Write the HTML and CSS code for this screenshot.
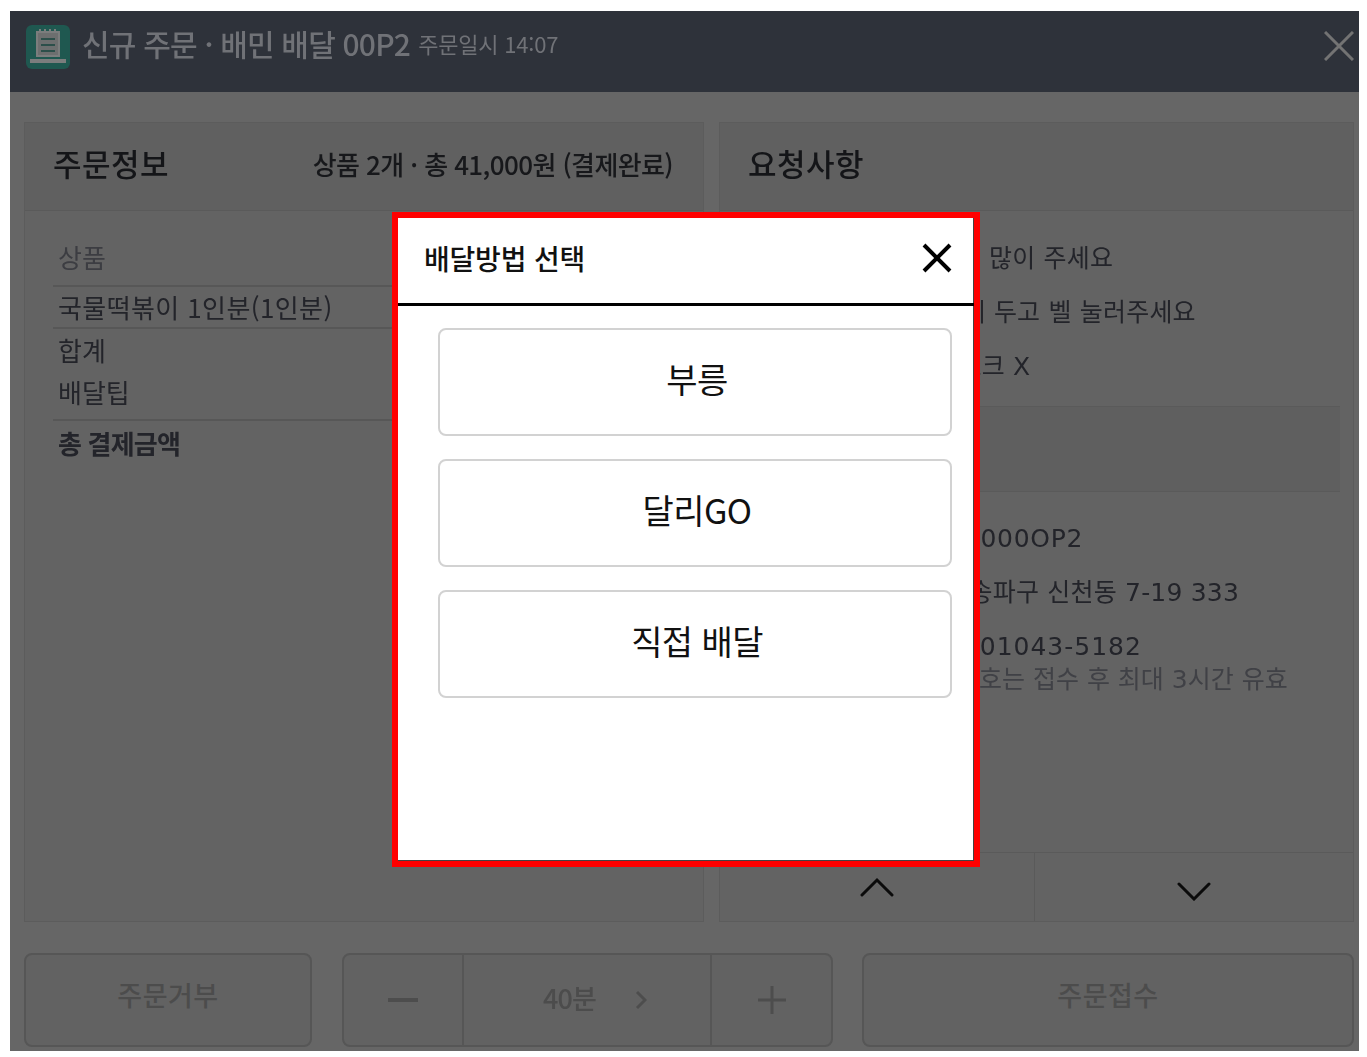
FILE: index.html
```html
<!DOCTYPE html>
<html lang="ko">
<head>
<meta charset="utf-8">
<title>신규 주문</title>
<link rel="stylesheet" href="styles.css">
</head>
<body>
<div class="window">
  <header class="topbar">
    <span class="app-icon">
      <svg width="44" height="44" viewBox="0 0 44 44"><rect width="44" height="44" rx="6" fill="#1f5850"/><path d="M11 7h22v24H11z" fill="#6d6f6f" stroke="#7b7d7d" stroke-width="2"/><path d="M15 14h14M15 20h14M15 26h14" stroke="#2c4f4a" stroke-width="2"/><path d="M4 36h36" stroke="#7b7d7d" stroke-width="4"/><path d="M14 4v4M19 4v4M24 4v4M29 4v4" stroke="#7b7d7d" stroke-width="2"/></svg>
    </span>
    <h1 class="topbar-title">신규 주문 · 배민 배달 00P2</h1>
    <span class="topbar-time">주문일시 14:07</span>
    <svg class="topbar-close" width="30" height="30" viewBox="0 0 30 30"><path d="M1 1l28 28M29 1L1 29" stroke="#737373" stroke-width="3" fill="none"/></svg>
  </header>

  <main class="panels">
    <section class="panel">
      <div class="panel-head">
        <h2 class="panel-title">주문정보</h2>
        <span class="panel-summary">상품 2개 · 총 41,000원 (결제완료)</span>
      </div>
      <div class="order-list">
        <div class="order-row order-label">상품</div>
        <div class="order-row order-item">국물떡볶이 1인분(1인분)</div>
        <div class="order-row">합계</div>
        <div class="order-row order-last">배달팁</div>
        <div class="order-row order-total">총 결제금액</div>
      </div>
    </section>

    <section class="panel">
      <div class="panel-head">
        <h2 class="panel-title">요청사항</h2>
      </div>
      <div class="request-list">
        <div class="line line-a">단무지는 많이 주세요</div>
        <div class="line line-b">문 앞에 두고 벨 눌러주세요</div>
        <div class="line line-c">수저 포크 X</div>
      </div>
      <div class="band"></div>
      <div class="info-list">
        <div class="line line-d">B2000OP2</div>
        <div class="line line-e">서울 송파구 신천동 7-19 333</div>
        <div class="line line-f">050-01043-5182</div>
        <div class="note">안심번호는 접수 후 최대 3시간 유효</div>
      </div>
      <div class="pager">
        <button class="pager-btn pager-up"><svg width="34" height="20" viewBox="0 0 34 20"><path d="M2 18L17 3l15 15" fill="none" stroke="#0b0b0b" stroke-width="3" stroke-linecap="round"/></svg></button>
        <button class="pager-btn pager-down"><svg width="34" height="20" viewBox="0 0 34 20"><path d="M2 3l15 15L32 3" fill="none" stroke="#0b0b0b" stroke-width="3" stroke-linecap="round"/></svg></button>
      </div>
    </section>
  </main>

  <footer class="actions">
    <button class="action action-reject">주문거부</button>
    <div class="stepper">
      <button class="step step-minus"><svg width="30" height="4" viewBox="0 0 30 4"><path d="M0 2h30" stroke="#4d4d4d" stroke-width="4"/></svg></button>
      <button class="step step-value"><span class="step-text">40분</span><svg width="12" height="20" viewBox="0 0 12 20"><path d="M2 2l8 8-8 8" fill="none" stroke="#4d4d4d" stroke-width="3"/></svg></button>
      <button class="step step-plus"><svg width="30" height="30" viewBox="0 0 30 30"><path d="M15 1v28M1 15h28" stroke="#4d4d4d" stroke-width="3"/></svg></button>
    </div>
    <button class="action action-accept">주문접수</button>
  </footer>

  <div class="modal">
    <div class="modal-head">
      <h3 class="modal-title">배달방법 선택</h3>
      <svg class="modal-close" width="32" height="32" viewBox="0 0 32 32"><path d="M3 3l26 26M29 3L3 29" stroke="#000" stroke-width="4" fill="none"/></svg>
    </div>
    <div class="modal-body">
      <button class="choice">부릉</button>
      <button class="choice">달리GO</button>
      <button class="choice">직접 배달</button>
    </div>
  </div>
</div>
</body>
</html>
```

FILE: styles.css
```css
* { box-sizing: border-box; }
html, body { margin: 0; padding: 0; background: #fff; }
body {
  padding: 11px 8px 0 10px;
  font-family: "Noto Sans CJK KR", "Noto Sans", sans-serif;
  color: #1f2024;
}
h1, h2, h3 { margin: 0; font-weight: 400; }
button { font-family: inherit; padding: 0; background: none; cursor: pointer; }

.window {
  position: relative;
  width: 1349px;
  height: 1040px;
  background: #666;
  display: flex;
  flex-direction: column;
  overflow: hidden;
}

.topbar {
  height: 81px;
  flex: none;
  background: #2e323a;
  display: flex;
  align-items: center;
  padding: 0 5px 0 16px;
  color: #707277;
  filter: blur(.4px);
}
.app-icon { display: flex; margin-right: 12px; margin-top: -9px; }
.topbar-title { font-size: 30px; font-weight: 500; letter-spacing: -0.8px; margin-top: -17px; line-height: 40px; }
.topbar-time { font-size: 22px; letter-spacing: -0.2px; margin: -17px 0 0 8px; }
.topbar-close { margin-left: auto; margin-top: -11px; }

.panels {
  flex: none;
  height: 800px;
  margin-top: 30px;
  padding: 0 5px 0 14px;
  display: grid;
  grid-template-columns: 680px 635px;
  column-gap: 15px;
  filter: blur(.4px);
}
.panel {
  background: #636363;
  border: 1px solid #5c5c5c;
  display: flex;
  flex-direction: column;
  min-height: 0;
}
.panel-head {
  height: 88px;
  flex: none;
  border-bottom: 1px solid #5a5a5a;
  background: #606060;
  display: flex;
  align-items: center;
  justify-content: space-between;
  padding: 0 30px 0 28px;
}
.panel-title { font-size: 31px; font-weight: 500; letter-spacing: .5px; line-height: 40px; color: #141518; margin-top: -7px; }
.panel-summary { font-size: 26px; font-weight: 500; letter-spacing: -0.6px; color: #17181b; margin-top: -7px; }

.order-list { padding: 0 0 0 28px; display: flex; flex-direction: column; }
.order-row { font-size: 26px; height: 42px; line-height: 42px; padding-left: 5px; color: #23242a; }
.order-label { height: 76px; line-height: 92px; color: #3c3d42; border-bottom: 2px solid #575757; }
.order-item { border-bottom: 2px solid #575757; line-height: 40px; letter-spacing: .4px; }
.order-last { height: 50px; border-bottom: 2px solid #575757; line-height: 42px; }
.order-total { font-weight: 700; line-height: 42px; margin-top: 1px; letter-spacing: -0.8px; }

.request-list { height: 195px; flex: none; padding-top: 21px; }
.line {
  font-family: "DejaVu Sans", "Noto Sans CJK KR", sans-serif;
  font-size: 25px;
  letter-spacing: .2px;
  height: 54px;
  line-height: 54px;
  white-space: nowrap;
  color: #23242a;
}
.line-a { padding-left: 168px; }
.line-b { padding-left: 188px; }
.line-c { padding-left: 184px; }
.line-d { padding-left: 226px; letter-spacing: .7px; }
.line-e { padding-left: 195px; }
.line-f { padding-left: 199px; letter-spacing: 1px; }
.band {
  height: 86px;
  flex: none;
  background: #5f5f5f;
  border-top: 1px solid #5a5a5a;
  border-bottom: 1px solid #5a5a5a;
  margin-right: 13px;
}
.info-list { flex: 1; padding-top: 20px; min-height: 0; }
.note {
  font-family: "DejaVu Sans", "Noto Sans CJK KR", sans-serif;
  font-size: 25px;
  line-height: 24px;
  margin-top: -6px;
  padding-left: 190px;
  color: #404146;
  white-space: nowrap;
}

.pager {
  height: 69px;
  flex: none;
  border-top: 1px solid #5a5a5a;
  display: grid;
  grid-template-columns: 315px 1fr;
}
.pager-btn { border: 0; display: flex; align-items: center; justify-content: center; }
.pager-up { border-right: 1px solid #5a5a5a; }
.pager-down { padding-top: 8px; }

.actions {
  flex: none;
  height: 94px;
  margin-top: 31px;
  padding: 0 5px 0 14px;
  display: flex;
  filter: blur(.4px);
}
.action {
  border: 2px solid #565656;
  border-radius: 8px;
  background: #626262;
  font-size: 27px;
  font-weight: 500;
  color: #4c4c4c;
  padding-bottom: 12px;
  letter-spacing: .5px;
}
.action-reject { width: 288px; margin-right: 30px; }
.action-accept { width: 492px; margin-left: 29px; }
.stepper {
  width: 491px;
  border: 2px solid #565656;
  border-radius: 8px;
  background: #626262;
  display: grid;
  grid-template-columns: 120px 1fr 121px;
}
.step { border: 0; display: flex; align-items: center; justify-content: center; color: #4c4c4c; }
.step-minus { border-right: 2px solid #565656; }
.step-plus { border-left: 2px solid #565656; }
.step-value { gap: 39px; font-size: 27px; font-weight: 500; letter-spacing: -0.9px; padding-left: 16px; }
.step-text { margin-top: -5px; }

.modal {
  position: absolute;
  left: 382px;
  top: 201px;
  width: 588px;
  height: 655px;
  border: 6px solid #f00;
  background: #fff;
  box-shadow: inset -1px -1px 0 #444;
  display: flex;
  flex-direction: column;
}
.modal-head {
  height: 88px;
  flex: none;
  border-bottom: 3px solid #000;
  display: flex;
  align-items: center;
  justify-content: space-between;
  padding: 0 21px 6px 26px;
}
.modal-title { font-size: 28px; letter-spacing: -0.2px; font-weight: 500; color: #111; }
.modal-body {
  padding: 22px 22px 0 40px;
  display: flex;
  flex-direction: column;
  gap: 23px;
}
.choice {
  height: 108px;
  border: 2px solid #d2d2d2;
  border-radius: 8px;
  background: #fff;
  font-size: 34px;
  letter-spacing: -0.6px;
  color: #111;
  padding: 0 0 8px 4px;
}
```
